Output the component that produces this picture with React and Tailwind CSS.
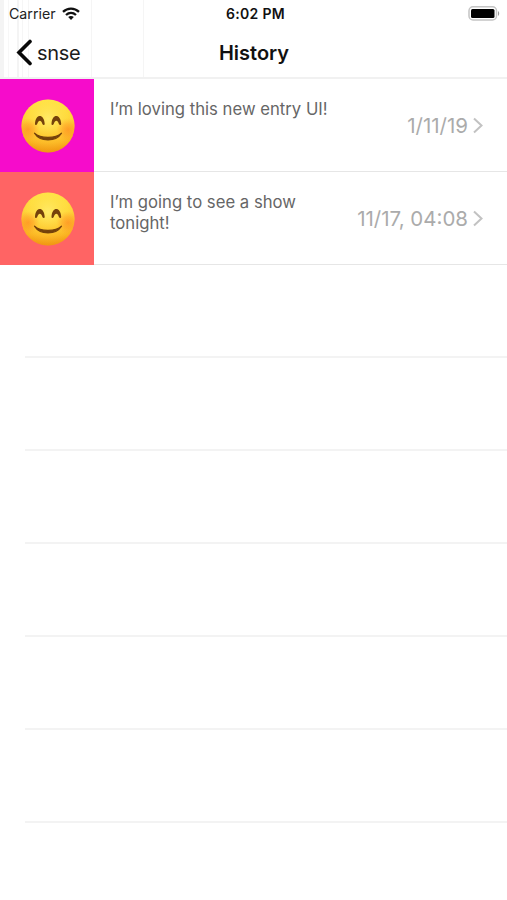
const entries = [
  { id: 1, text: "I’m loving this new entry UI!", date: "1/11/19", color: "bg-[#f60ccb]", gradient: "face-1" },
  { id: 2, text: "I’m going to see a show tonight!", date: "11/17, 04:08", color: "bg-[#ff6464]", gradient: "face-2" },
];

const emptyRows = [1, 2, 3, 4, 5, 6];

function SmileFace({ id }) {
  return (
    <svg className="w-[54px] h-[54px]" viewBox="0 0 54 54" fill="none">
      <defs>
        <linearGradient id={id} x1="27" y1="0" x2="27" y2="54" gradientUnits="userSpaceOnUse">
          <stop offset="0" stopColor="#ffe445" />
          <stop offset="0.5" stopColor="#ffd334" />
          <stop offset="0.8" stopColor="#fdb722" />
          <stop offset="1" stopColor="#ee9412" />
        </linearGradient>
        <radialGradient id={`${id}-shine`} cx="27" cy="20" r="32" gradientUnits="userSpaceOnUse">
          <stop offset="0" stopColor="#fff27a" stopOpacity="0.75" />
          <stop offset="0.6" stopColor="#ffe04a" stopOpacity="0.25" />
          <stop offset="1" stopColor="#f39a12" stopOpacity="0.4" />
        </radialGradient>
        <radialGradient id={`${id}-cheek`}>
          <stop offset="0" stopColor="#ff8420" stopOpacity="0.65" />
          <stop offset="0.5" stopColor="#ff8c20" stopOpacity="0.4" />
          <stop offset="1" stopColor="#ff9a2e" stopOpacity="0" />
        </radialGradient>
        <clipPath id={`${id}-clip`}>
          <circle cx="27" cy="27" r="26.5" />
        </clipPath>
      </defs>
      <circle cx="27" cy="27" r="26.5" fill={`url(#${id})`} />
      <circle cx="27" cy="27" r="26.5" fill={`url(#${id}-shine)`} />
      <g clipPath={`url(#${id}-clip)`}>
        <circle cx="7" cy="30.500" r="11.500" fill={`url(#${id}-cheek)`} />
        <circle cx="47" cy="30.500" r="11.500" fill={`url(#${id}-cheek)`} />
      </g>
      <path d="M14 24.800C14.500 14.500 23 14.500 23.700 24.800C23.700 26.500 22 26.500 21.400 25C20 20.800 17.700 20.800 16.200 25C15.600 26.500 14 26.500 14 24.800Z" fill="#74420b" />
      <path d="M30.500 24.800C31 14.500 39.500 14.500 40.200 24.800C40.200 26.500 38.500 26.500 37.900 25C36.500 20.800 34.200 20.800 32.700 25C32.100 26.500 30.500 26.500 30.500 24.800Z" fill="#74420b" />
      <path d="M13.500 34.200C19 43.200 35 43.200 40.500 34.200C34.500 39.800 19.500 39.800 13.500 34.200Z" fill="#74420b" stroke="#74420b" strokeWidth="1.200" strokeLinejoin="round" />
    </svg>
  );
}

function StatusBar() {
  return (
    <div className="grid grid-cols-3 items-center h-[27px] pl-[9px] pr-[7px] text-[#222]">
      <div className="flex items-center gap-[6px]">
        <span className="text-[14.2px]">Carrier</span>
        <svg className="w-[18px] h-[13px]" viewBox="0 0 18 13" fill="none" stroke="#111" strokeWidth="2.300">
          <path d="M1 4.900C5.500 0.600 12.500 0.600 17 4.900" />
          <path d="M4 8C7 5.300 11 5.300 14 8" />
          <path d="M6.200 10C7.800 8.700 10.200 8.700 11.800 10L9 12.900Z" fill="#111" stroke="none" />
        </svg>
      </div>
      <span className="pl-[2px] text-center text-[14px] font-semibold tracking-[0.3px] text-[#111]">6:02 PM</span>
      <svg className="w-[33px] h-[15px] justify-self-end" viewBox="0 0 33 15" fill="none">
        <rect x="2" y="0.800" width="27.500" height="13.200" rx="4" stroke="#c4c4c4" strokeWidth="1.500" />
        <rect x="4" y="2.900" width="23.500" height="9" rx="1.500" fill="#000" />
        <path d="M31 5C32.600 6 32.600 9 31 10Z" fill="#999" />
      </svg>
    </div>
  );
}

function NavBar() {
  return (
    <div className="grid grid-cols-3 items-center h-[51px] px-4">
      <button className="flex items-center gap-[4px] text-[20px] tracking-[-0.3px] text-[#1c1c1c]">
        <svg className="w-[17px] h-[27px]" viewBox="0 0 17 27" fill="none" stroke="#080808" strokeWidth="3.600" strokeLinecap="round">
          <path d="M14 2.500L3 13.500L14 24.500" />
        </svg>
        <span>snse</span>
      </button>
      <h1 className="pl-px text-center text-[20px] font-semibold text-[#111]">History</h1>
    </div>
  );
}

function EntryRow({ entry }) {
  return (
    <li className="flex h-[93px]">
      <div className={`flex items-center justify-center w-[94px] pl-[2px] ${entry.color}`}>
        <SmileFace id={entry.gradient} />
      </div>
      <div className="flex flex-1 border-b border-[#e6e6e6] pl-4 pr-6">
        <p className="w-[224px] shrink-0 pt-5 text-[16.7px] leading-[21px] text-[#666]">{entry.text}</p>
        <div className="flex flex-1 items-center justify-end gap-[5px] whitespace-nowrap pt-[2px] text-[20.5px] text-[#ababab]">
          <span>{entry.date}</span>
          <svg className="mb-[2px] w-[10px] h-[17px]" viewBox="0 0 10 17" fill="none" stroke="#c2c2c2" strokeWidth="2">
            <path d="M1 1.500L8.500 8.500L1 15.500" />
          </svg>
        </div>
      </div>
    </li>
  );
}

export default function App() {
  return (
    <div className="w-full h-[900px] overflow-hidden bg-white font-['Inter',sans-serif]">
      <header className="relative h-[79px] border-b-2 border-[#f1f1f1]">
        {/* Faint edges of the screen behind the bar */}
        <div className="absolute inset-0 flex">
          <div className="w-[4px] bg-[#f4f4f4]" />
          <div className="ml-[4px] w-px bg-[#f7f7f7]" />
          <div className="ml-[8px] w-[2px] bg-[#f4f4f4]" />
          <div className="ml-[3px] w-px bg-[#f6f6f6]" />
          <div className="ml-[5px] w-px bg-[#f6f6f6]" />
          <div className="ml-[62px] w-px bg-[#f5f5f5]" />
          <div className="ml-[51px] w-px bg-[#f5f5f5]" />
        </div>
        <div className="relative">
          <StatusBar />
          <NavBar />
        </div>
      </header>

      <ul>
        {entries.map((entry) => (
          <EntryRow key={entry.id} entry={entry} />
        ))}
        {emptyRows.map((row) => (
          <li key={row} className="ml-[25px] h-[93px] border-b-2 border-[#f3f3f3]" />
        ))}
      </ul>
    </div>
  );
}
